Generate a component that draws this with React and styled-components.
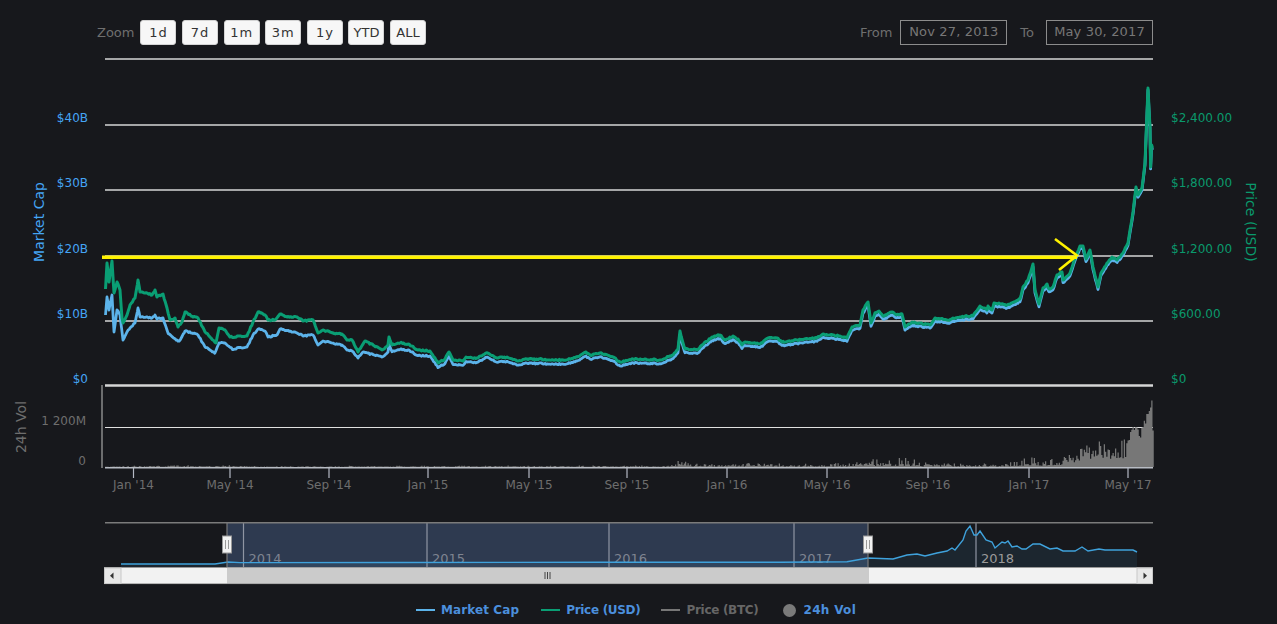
import React from 'react';
import styled, { createGlobalStyle } from 'styled-components';

const GlobalStyle = createGlobalStyle`
  html, body {
    margin: 0;
    height: 100%;
    overflow: hidden;
    background: #17181c;
    font-family: 'DejaVu Sans', Verdana, sans-serif;
  }
`;

const Page = styled.div`
  width: 1277px;
  height: 624px;
  background: #17181c;
`;

const Toolbar = styled.div`
  display: flex;
  align-items: center;
  justify-content: space-between;
  height: 25px;
  padding: 20px 124px 0 97px;
`;

const ToolGroup = styled.div`
  display: flex;
  align-items: center;
`;

const ToolLabel = styled.span`
  font-size: 13px;
  color: #6f6f6f;
  margin-right: ${(props) => props.$gap}px;
  margin-left: ${(props) => props.$left || 0}px;
`;

const ZoomButton = styled.button`
  width: 36px;
  height: 25px;
  margin-right: 5.6px;
  padding: 0;
  border: 1px solid #d4d4d4;
  border-radius: 3px;
  background: #f7f7f7;
  color: #333;
  font: 13px 'DejaVu Sans', Verdana, sans-serif;
  letter-spacing: ${(props) => props.$spacing}px;
`;

const DateBox = styled.div`
  box-sizing: border-box;
  width: 107px;
  height: 25px;
  border: 1.5px solid #8c8c8c;
  color: #777;
  font-size: 13px;
  line-height: 22px;
  letter-spacing: 0.15px;
  text-align: center;
`;

const ChartSvg = styled.svg`
  display: block;
`;

const AxisText = styled.text`
  font-size: ${(props) => props.$size || 12}px;
  fill: ${(props) => props.$color};
  text-anchor: ${(props) => props.$anchor || 'start'};
`;

const Legend = styled.div`
  box-sizing: border-box;
  display: flex;
  align-items: center;
  height: 34px;
  padding: 6px 0 0 416px;
`;

const LegendItem = styled.div`
  display: flex;
  align-items: center;
  margin-right: ${(props) => props.$gap}px;
  font-size: 12px;
  font-weight: 700;
  letter-spacing: ${(props) => props.$spacing}px;
  color: ${(props) => props.$color};
`;

const LegendLine = styled.span`
  width: 19px;
  height: 2px;
  margin-right: 6px;
  background: ${(props) => props.$color};
`;

const LegendDot = styled.span`
  width: 13px;
  height: 13px;
  margin-right: 8px;
  border-radius: 50%;
  background: #7a7a7a;
`;

const BLUE = '#5cb3ea';
const GREEN = '#0a9e74';
const GRID = '#d6d6d6';
const BLUE_LABEL = '#45a5f5';
const GREEN_LABEL = '#0a9a6c';
const GREY_LABEL = '#6e6e6e';

const priceKeys = [
  [105.5, 289], [107, 263], [109, 282], [112, 261], [114, 293], [117, 282], [120, 290], [122, 318], [123, 323],
  [127, 315], [130, 305], [135, 298], [138, 280], [140, 292], [145, 293], [152, 295], [155, 290], [157, 297],
  [163, 294], [167, 308], [170, 320], [175, 318], [178, 327], [182, 322], [185, 312], [193, 317], [198, 318],
  [205, 332], [210, 337], [216, 343], [219, 328], [225, 330], [230, 337], [247, 336], [253, 322], [258, 312],
  [265, 315], [268, 320], [275, 320], [280, 314], [287, 317], [297, 317], [303, 321], [313, 320], [318, 333],
  [323, 330], [333, 333], [342, 334], [347, 340], [352, 340], [358, 352], [365, 341], [373, 345], [382, 350],
  [388, 345], [389, 337], [392, 345], [400, 343], [408, 344], [418, 350], [430, 351], [438, 363], [445, 359],
  [449, 352], [453, 360], [463, 361], [466, 357], [477, 358], [486, 353], [497, 358], [507, 357], [517, 361],
  [527, 359], [563, 360], [577, 357], [586, 352], [590, 355], [600, 353], [613, 357], [620, 362], [633, 359],
  [660, 360], [673, 355], [678, 349], [680, 331], [683, 343], [685, 349], [697, 350], [702, 345], [712, 337],
  [720, 335], [725, 340], [733, 336], [738, 339], [742, 345], [745, 342], [760, 344], [768, 338], [777, 338],
  [782, 342], [797, 340], [817, 338], [823, 334], [840, 336], [847, 338], [852, 327], [860, 325], [863, 310],
  [868, 302], [871, 323], [875, 313], [879, 311], [883, 316], [892, 312], [895, 314], [902, 314], [905, 327],
  [912, 322], [930, 325], [935, 318], [947, 320], [967, 316], [973, 316], [980, 306], [987, 310], [988, 306],
  [992, 310], [994, 303], [1007, 305], [1020, 299], [1023, 287], [1028, 280], [1033, 264], [1035, 290],
  [1039, 304], [1043, 288], [1047, 284], [1049, 289], [1053, 287], [1057, 275], [1062, 272], [1063, 280],
  [1070, 273], [1075, 258], [1080, 246], [1083, 246], [1086, 259], [1090, 250], [1093, 267], [1098, 287],
  [1101, 273], [1107, 263], [1112, 257], [1117, 260], [1123, 253], [1128, 243], [1133, 212], [1136, 187],
  [1138, 195], [1142, 188], [1145, 163], [1148, 88], [1150, 127], [1150.6, 167], [1151.6, 145], [1152.5, 148],
];

const capKeys = [
  [105.5, 315], [107, 297], [109, 310], [112, 295], [114, 332], [117, 310], [120, 315], [123, 340], [128, 330],
  [135, 323], [138, 308], [140, 317], [152, 318], [155, 315], [157, 319], [163, 318], [168, 333], [173, 337],
  [179, 342], [185, 331], [198, 335], [205, 347], [215, 353], [219, 343], [225, 343], [232, 349], [247, 347],
  [253, 335], [258, 329], [265, 331], [268, 337], [277, 335], [280, 329], [297, 333], [303, 336], [313, 335],
  [318, 345], [323, 341], [342, 345], [347, 350], [352, 351], [358, 358], [363, 352], [382, 357], [388, 352],
];

const capOffset = [[388, 7], [440, 4.5], [700, 3.6], [1000, 3], [1130, 2.4], [1153, 1.8]];

const volumeKeys = [
  [105, 0.5], [130, 0.8], [200, 1.5], [260, 0.6], [428, 1], [670, 1], [680, 7], [690, 2.5], [740, 3], [840, 3],
  [865, 7], [890, 6], [905, 7], [930, 2.5], [1000, 2.5], [1030, 10], [1040, 7], [1060, 7], [1075, 14], [1092, 24],
  [1110, 21], [1125, 24], [1133, 44], [1140, 36], [1147, 56], [1149, 68], [1151.4, 72], [1152, 44],
];

const navigatorKeys = [
  [121, 564], [215, 564], [228, 562], [240, 562.6], [400, 562.5], [600, 562.3], [780, 562.3], [847, 561.7],
  [868, 558], [893, 559], [907, 555], [917, 554], [925, 556], [937, 553], [947, 551], [952, 548], [955, 550],
  [963, 540], [966, 531], [970, 526], [974, 535], [977, 535], [980, 531], [986, 540], [992, 542], [995, 548],
  [1002, 542], [1005, 543], [1008, 541], [1012, 547], [1017, 546], [1022, 549], [1026, 549], [1033, 544],
  [1040, 544], [1050, 549], [1057, 548], [1063, 551], [1075, 551], [1082, 547], [1088, 551], [1099, 549],
  [1105, 550], [1133, 550], [1137, 552],
];

const valueAt = (keys, x) => {
  if (x <= keys[0][0]) return keys[0][1];
  for (let i = 1; i < keys.length; i++) {
    if (x <= keys[i][0]) {
      const [x0, y0] = keys[i - 1];
      const [x1, y1] = keys[i];
      return y0 + ((y1 - y0) * (x - x0)) / (x1 - x0);
    }
  }
  return keys[keys.length - 1][1];
};

let seed = 17;
const rand = () => {
  seed = (seed * 16807) % 2147483647;
  return seed / 2147483647;
};

// fills the gaps between the read-off points with a little noise
const roughen = (keys, amount) => {
  const out = [];
  keys.forEach((p, i) => {
    out.push(p);
    const next = keys[i + 1];
    if (!next) return;
    for (let x = p[0] + 1.2; x < next[0] - 0.6; x += 1.2) {
      out.push([x, valueAt(keys, x) + (rand() - 0.5) * amount]);
    }
  });
  return out;
};

const toPath = (pts) => pts.map((p, i) => `${i ? 'L' : 'M'}${p[0].toFixed(1)} ${p[1].toFixed(1)}`).join('');

const pricePts = roughen(priceKeys, 1.5);
const capPts = pricePts.map(([x, y]) =>
  x <= 388 ? [x, valueAt(capKeys, x) + (y - valueAt(priceKeys, x))] : [x, y + valueAt(capOffset, x)]
);
const pricePath = toPath(pricePts);
const capPath = toPath(capPts);
const navPath = toPath(navigatorKeys);

const volumePath = (() => {
  let d = 'M105 467';
  for (let x = 105; x < 1153; x += 1.25) {
    const factor = x > 1125 ? 0.8 + rand() * 0.2 : x > 1060 ? 0.35 + rand() * rand() * 1.1 : 0.15 + rand() * rand() * 1.5;
    const h = valueAt(volumeKeys, x) * factor;
    d += `V${(467 - h).toFixed(1)}H${(x + 1.25).toFixed(2)}`;
  }
  return `${d}V467Z`;
})();

const leftTicks = [['$40B', 122], ['$30B', 187], ['$20B', 253], ['$10B', 318], ['$0', 383]];
const rightTicks = [['$2,400.00', 122], ['$1,800.00', 187], ['$1,200.00', 253], ['$600.00', 318], ['$0', 383]];
const gridLines = [59, 125, 190, 256, 321];
const months = [
  ["Jan '14", 133.5], ["May '14", 230], ["Sep '14", 329], ["Jan '15", 428], ["May '15", 529], ["Sep '15", 627],
  ["Jan '16", 727], ["May '16", 827], ["Sep '16", 928], ["Jan '17", 1029], ["May '17", 1128],
];
const years = [['2014', 243.5], ['2015', 427], ['2016', 609], ['2017', 794], ['2018', 976]];
const zoomButtons = [['1d', 1], ['7d', 1], ['1m', 1], ['3m', 1], ['1y', 1], ['YTD', 0], ['ALL', 0]];

const Handle = ({ x }) => (
  <g>
    <rect x={x - 4.5} y={536} width={9} height={17} fill="#f2f2f2" stroke="#999" />
    <path d={`M${x - 1.5} 540V549M${x + 1.5} 540V549`} stroke="#999" />
  </g>
);

const Chart = () => (
  <ChartSvg width={1277} height={545} viewBox="0 45 1277 545">
    {gridLines.map((y) => (
      <line key={y} x1={105} x2={1153} y1={y} y2={y} stroke={GRID} strokeWidth={1.5} />
    ))}
    <line x1={105} x2={1153} y1={385.5} y2={385.5} stroke={GRID} strokeWidth={2.5} />
    <line x1={105} x2={1153} y1={427.5} y2={427.5} stroke="#e0e0e0" strokeWidth={1.2} />
    <line x1={102} x2={102} y1={385} y2={468} stroke="#8a8a8a" strokeWidth={1.5} />

    {leftTicks.map(([t, y]) => (
      <AxisText key={t} x={88} y={y} $color={BLUE_LABEL} $anchor="end">{t}</AxisText>
    ))}
    {rightTicks.map(([t, y]) => (
      <AxisText key={t} x={1171} y={y} $color={GREEN_LABEL}>{t}</AxisText>
    ))}
    <AxisText transform="translate(44 222) rotate(-90)" $size={14} $color={BLUE_LABEL} $anchor="middle">Market Cap</AxisText>
    <AxisText transform="translate(1246 222) rotate(90)" $size={14} $color={GREEN_LABEL} $anchor="middle">Price (USD)</AxisText>
    <AxisText transform="translate(26 427) rotate(-90)" $size={14} $color={GREY_LABEL} $anchor="middle">24h Vol</AxisText>
    <AxisText x={86} y={425} $color={GREY_LABEL} $anchor="end">1 200M</AxisText>
    <AxisText x={86} y={465} $color={GREY_LABEL} $anchor="end">0</AxisText>

    <path d={capPath} fill="none" stroke={BLUE} strokeWidth={2.8} strokeLinejoin="round" />
    <path d={pricePath} fill="none" stroke={GREEN} strokeWidth={3} strokeLinejoin="round" />

    <path d={volumePath} fill="#777" />
    <line x1={105} x2={1153} y1={467.7} y2={467.7} stroke="#b8bcc4" strokeWidth={1.5} />
    {months.map(([t, x]) => (
      <g key={t}>
        <line x1={x} x2={x} y1={468} y2={478} stroke="#b4b9c4" strokeWidth={1.2} />
        <AxisText x={x} y={489} $color={GREY_LABEL} $anchor="middle">{t}</AxisText>
      </g>
    ))}

    <path d="M102 257.3H1077" stroke="#fff200" strokeWidth={3.4} />
    <path d="M1055 239L1077 255.5L1059 270" fill="none" stroke="#fff200" strokeWidth={2.6} />

    {/* navigator */}
    <rect x={227} y={523} width={641} height={45} fill="#2e3a50" />
    <path d={`${navPath}V567H121Z`} fill="#4aa5dc" fillOpacity={0.1} />
    {years.map(([t, x]) => (
      <g key={t}>
        <line x1={x} x2={x} y1={523} y2={567} stroke="#8f95a3" strokeWidth={1.2} />
        <AxisText x={x + 5} y={563} $size={13} $color={t === '2018' ? '#9a9a9a' : '#7f8490'}>{t}</AxisText>
      </g>
    ))}
    <path d={navPath} fill="none" stroke="#3fa2dc" strokeWidth={1.4} />
    <line x1={105} x2={1153} y1={522.7} y2={522.7} stroke="#7b7b7b" strokeWidth={1.5} />
    <line x1={227} x2={227} y1={523} y2={567} stroke="#7b7b7b" strokeWidth={1.2} />
    <line x1={868} x2={868} y1={523} y2={567} stroke="#7b7b7b" strokeWidth={1.2} />
    <Handle x={227} />
    <Handle x={868} />

    {/* scrollbar */}
    <rect x={104} y={567.5} width={1049} height={16.5} fill="#f2f2f2" />
    <rect x={227} y={567.5} width={642} height={16.5} fill="#cbcbcb" />
    <path d="M104 583.6H1153M104 567.5H1153" stroke="#9c9c9c" strokeWidth={0.8} />
    <rect x={104.5} y={568} width={16.5} height={15.5} fill="#e8e8e8" stroke="#c8c8c8" />
    <rect x={1137} y={568} width={15.5} height={15.5} fill="#e8e8e8" stroke="#c8c8c8" />
    <path d="M113.5 572.5V579L110 575.7Z" fill="#333" />
    <path d="M1143.5 572.5V579L1147 575.7Z" fill="#333" />
    <path d="M545 572V579M547.5 572V579M550 572V579" stroke="#444" />
  </ChartSvg>
);

const App = () => (
  <Page>
    <GlobalStyle />
    <Toolbar>
      <ToolGroup>
        <ToolLabel $gap={6}>Zoom</ToolLabel>
        {zoomButtons.map(([label, spacing]) => (
          <ZoomButton key={label} $spacing={spacing}>{label}</ZoomButton>
        ))}
      </ToolGroup>
      <ToolGroup>
        <ToolLabel $gap={8}>From</ToolLabel>
        <DateBox>Nov 27, 2013</DateBox>
        <ToolLabel $left={13} $gap={12}>To</ToolLabel>
        <DateBox>May 30, 2017</DateBox>
      </ToolGroup>
    </Toolbar>
    <Chart />
    <Legend>
      <LegendItem $gap={22} $spacing={0.1} $color="#4b8fdc"><LegendLine $color={BLUE} />Market Cap</LegendItem>
      <LegendItem $gap={21} $spacing={-0.3} $color="#4b8fdc"><LegendLine $color={GREEN} />Price (USD)</LegendItem>
      <LegendItem $gap={24} $spacing={-0.3} $color="#666"><LegendLine $color="#777" />Price (BTC)</LegendItem>
      <LegendItem $gap={0} $spacing={0.3} $color="#4b8fdc"><LegendDot />24h Vol</LegendItem>
    </Legend>
  </Page>
);

export default App;
